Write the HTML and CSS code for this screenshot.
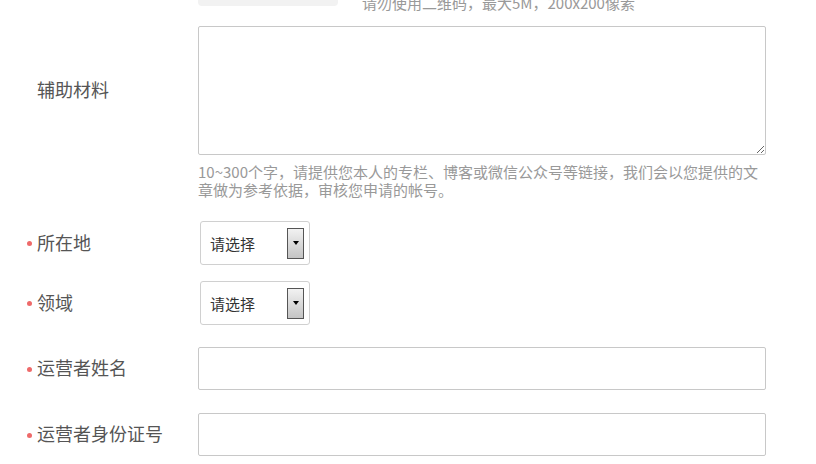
FILE: index.html
```html
<!DOCTYPE html>
<html lang="zh">
<head>
<meta charset="utf-8">
<link rel="stylesheet" href="styles.css">
</head>
<body>
<form class="form">
  <div class="row row-upload">
    <div class="label"></div>
    <div class="upload">
      <div class="upload-box"></div>
      <span class="upload-hint">请勿使用二维码，最大5M，200x200像素</span>
    </div>
  </div>

  <div class="row row-area">
    <div class="label label-area">辅助材料</div>
    <div class="control">
      <textarea class="textarea"></textarea>
      <p class="help">10~300个字，请提供您本人的专栏、博客或微信公众号等链接，我们会以您提供的文章做为参考依据，审核您申请的帐号。</p>
    </div>
  </div>

  <div class="row row-select1">
    <div class="label label-sel req">所在地</div>
    <div class="select">
      <span class="select-text">请选择</span>
      <span class="select-btn"><span class="tri"></span></span>
    </div>
  </div>

  <div class="row row-select2">
    <div class="label label-sel req">领域</div>
    <div class="select">
      <span class="select-text">请选择</span>
      <span class="select-btn"><span class="tri"></span></span>
    </div>
  </div>

  <div class="row row-input1">
    <div class="label label-input req">运营者姓名</div>
    <input class="input" type="text">
  </div>

  <div class="row row-input2">
    <div class="label label-input req">运营者身份证号</div>
    <input class="input" type="text">
  </div>
</form>
</body>
</html>
```

FILE: styles.css
```css
html, body {
  margin: 0;
  padding: 0;
  background: #fff;
  overflow: hidden;
}
body {
  font-family: "Noto Sans CJK SC", "Microsoft YaHei", sans-serif;
  color: #555;
}
.form {
  margin-top: -34px;
}
.row {
  display: flex;
  align-items: flex-start;
}
.label {
  width: 198px;
  flex: none;
  box-sizing: border-box;
  padding-left: 37px;
  padding-bottom: 3px;
  font-size: 18px;
  color: #555;
  position: relative;
  display: flex;
  align-items: center;
}
.req::before {
  content: "";
  position: absolute;
  left: 27px;
  top: 50%;
  width: 5px;
  height: 5px;
  margin-top: -2px;
  border-radius: 50%;
  background: #ee6a6a;
}

/* upload row */
.upload {
  display: flex;
  align-items: flex-end;
}
.upload-box {
  width: 140px;
  height: 40px;
  background: #f2f2f2;
  border-radius: 4px;
}
.upload-hint {
  margin-left: 24px;
  font-size: 15px;
  line-height: 18px;
  color: #999;
  margin-bottom: -6px;
}

/* textarea row */
.row-area {
  margin-top: 20px;
}
.label-area {
  height: 129px;
}
.control {
  width: 568px;
}
.textarea {
  display: block;
  width: 568px;
  height: 129px;
  box-sizing: border-box;
  margin: 0;
  border: 1px solid #c8c8c8;
  border-radius: 2px;
  resize: both;
  font-family: inherit;
}
.help {
  margin: 8px 0 0;
  font-size: 15px;
  line-height: 18px;
  color: #999;
}

/* selects */
.row-select1 {
  margin-top: 22px;
}
.row-select2 {
  margin-top: 16px;
}
.label-sel {
  height: 44px;
}
.select {
  margin-left: 2px;
  width: 110px;
  height: 44px;
  box-sizing: border-box;
  border: 1px solid #d0d0d0;
  border-radius: 3px;
  display: flex;
  align-items: center;
  justify-content: space-between;
  padding: 0 5px 0 9px;
}
.select-text {
  font-size: 15px;
  color: #333;
}
.select-btn {
  width: 17px;
  height: 31px;
  box-sizing: border-box;
  border: 1px solid #555;
  background: linear-gradient(#f2f2f2, #c4c4c4);
  display: flex;
  align-items: center;
  justify-content: center;
}
.tri {
  width: 0;
  height: 0;
  border-left: 3px solid transparent;
  border-right: 3px solid transparent;
  border-top: 4px solid #000;
}

/* inputs */
.row-input1 {
  margin-top: 22px;
}
.row-input2 {
  margin-top: 23px;
}
.label-input {
  height: 43px;
}
.input {
  display: block;
  width: 568px;
  height: 43px;
  box-sizing: border-box;
  margin: 0;
  border: 1px solid #c8c8c8;
  border-radius: 2px;
  outline: none;
}
```
